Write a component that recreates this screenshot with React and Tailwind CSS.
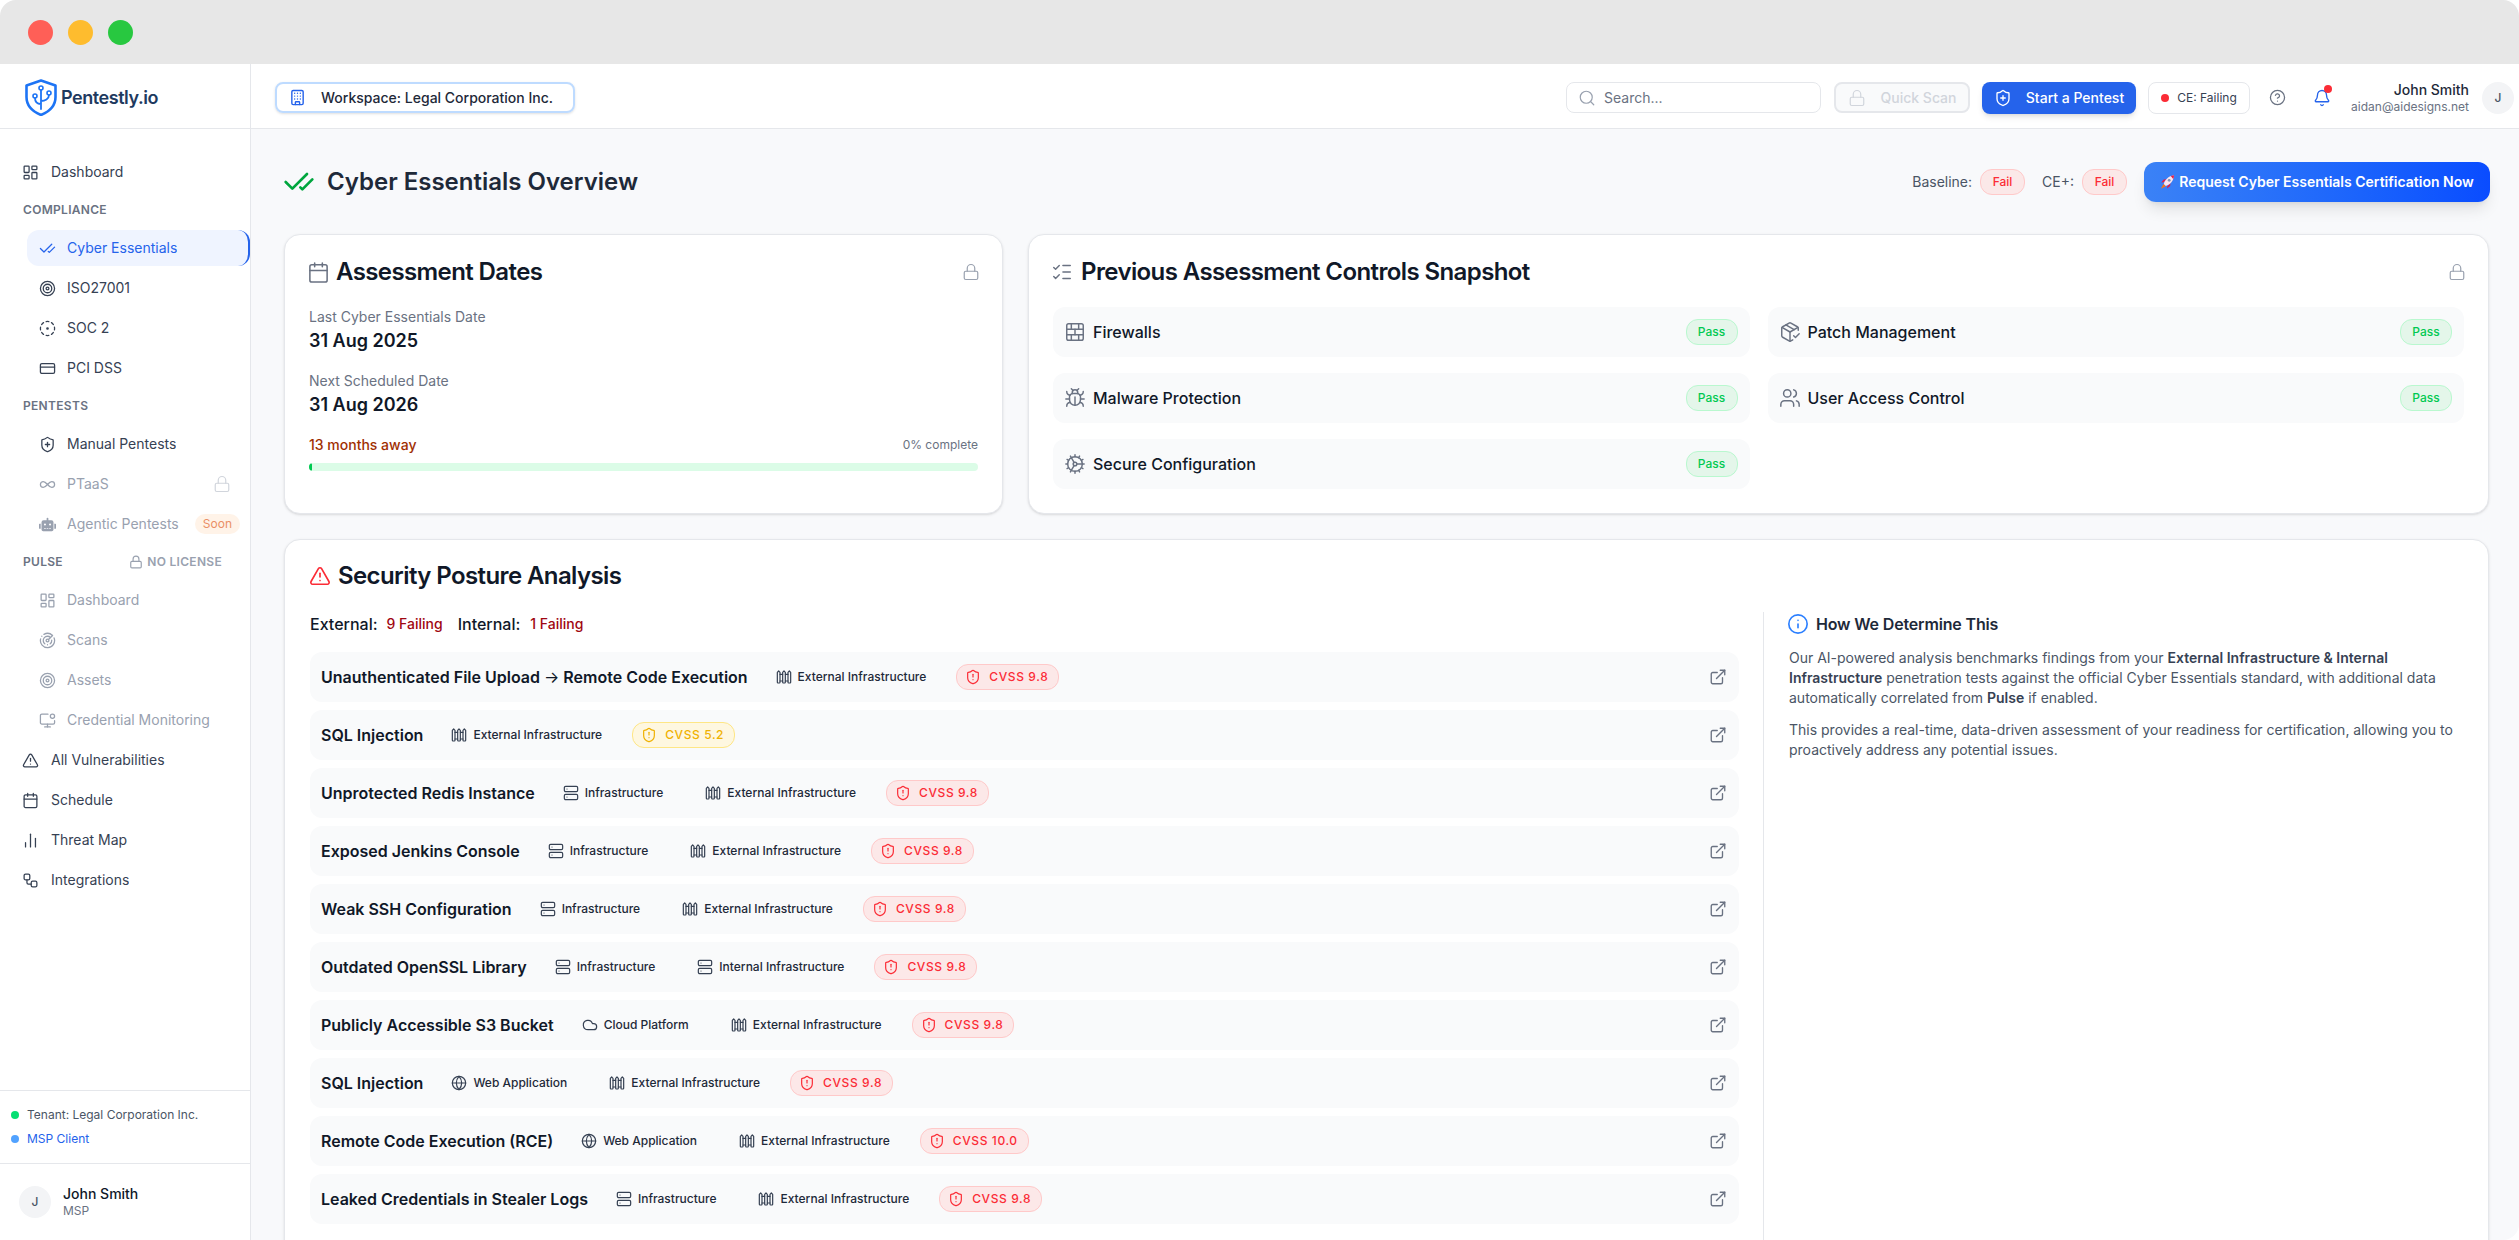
import React from 'react';
import {
  Bell, Building, Calendar, ChartNoAxesColumn, CheckCheck, CircleDotDashed, CircleHelp, Cloud, Cog, CreditCard,
  ExternalLink, Fence, Globe, Info, Infinity as InfinityIcon, LayoutDashboard, ListChecks, Lock, MonitorDot,
  PackageCheck, Radar, Search, Server, ShieldAlert, ShieldPlus, Target, TriangleAlert, Users, Workflow, BrickWall, Bug,
} from 'lucide-react';
import { FaRobot } from 'react-icons/fa';

function LogoShield() {
  return (
    <svg width="32" height="37" viewBox="0 0 32 37" fill="none" stroke="#1d74f5" strokeLinecap="round" strokeLinejoin="round">
      <path d="M16 1.500 30.500 6.500V18c0 8.500-6 14.500-14.500 18C7.500 32.500 1.500 26.500 1.500 18V6.500Z" strokeWidth="2.600" />
      <path d="M16 30V11M16 25c-4 0-6-2-6-6M16 22c4 0 8-2 8-6" strokeWidth="1.800" />
      <circle cx="16" cy="9" r="2" strokeWidth="1.600" />
      <circle cx="10" cy="17" r="2" strokeWidth="1.600" />
      <circle cx="24" cy="14" r="2" strokeWidth="1.600" />
    </svg>
  );
}

function RocketGlyph() {
  return (
    <svg width="15" height="16" viewBox="0 0 16 16">
      <path d="M3.600 10 1 15.300 6.300 12.600Z" fill="#f97316" />
      <path d="M3.800 8.300 1.300 8.600 4 5.300 7 5ZM7.800 12.400l-.2 2.500 3.200-2.700.3-3Z" fill="#e11d48" />
      <path d="M4 10C5.300 5.300 9.300 1.500 15 .8 14.600 6.700 10.800 10.800 6.200 12.200Z" fill="#fbe4ec" />
      <path d="M11.500 1.600 15 .8c-.1 1.400-.4 2.800-.9 4Z" fill="#e11d48" />
      <circle cx="9.800" cy="6.200" r="1.500" fill="#7c93b8" />
    </svg>
  );
}

function NavItem({ icon: Icon, label, sub, active, muted, right }) {
  const tone = active
    ? 'bg-[#eff4ff] text-[#2563eb] border-r-2 border-[#2563eb] rounded-xl'
    : muted ? 'text-gray-400' : 'text-gray-700';
  return (
    <div className={`flex items-center h-9 ${sub ? 'ml-[27px] pl-[12px] pr-[11px]' : 'pl-[22px]'} ${tone}`}>
      <Icon size={17} strokeWidth={1.800} className="shrink-0" />
      <span className={`text-sm truncate ${sub ? 'ml-[11px]' : 'ml-[12px]'}`}>{label}</span>
      {right && <span className="ml-auto">{right}</span>}
    </div>
  );
}

function SectionLabel({ children, right }) {
  return (
    <div className="flex items-center justify-between h-4 pl-[23px] pr-[28px] text-xs font-semibold uppercase tracking-wide text-gray-500">
      <span>{children}</span>
      {right}
    </div>
  );
}

function Sidebar() {
  return (
    <aside className="w-[251px] shrink-0 flex flex-col bg-white border-r border-gray-200">
      <div className="h-[65px] shrink-0 border-b border-gray-200 flex items-center pl-[25px] pt-[3px]">
        <LogoShield />
        <span className="ml-1 text-lg font-semibold tracking-tight text-[#1e3a5f]">Pentestly.io</span>
      </div>
      <nav className="flex-1 pt-[25px] flex flex-col">
        <NavItem icon={LayoutDashboard} label="Dashboard" />
        <div className="mt-3"><SectionLabel>Compliance</SectionLabel></div>
        <div className="mt-3 flex flex-col gap-1">
          <NavItem icon={CheckCheck} label="Cyber Essentials" sub active />
          <NavItem icon={Target} label="ISO27001" sub />
          <NavItem icon={CircleDotDashed} label="SOC 2" sub />
          <NavItem icon={CreditCard} label="PCI DSS" sub />
        </div>
        <div className="mt-3"><SectionLabel>Pentests</SectionLabel></div>
        <div className="mt-3 flex flex-col gap-1">
          <NavItem icon={ShieldPlus} label="Manual Pentests" sub />
          <NavItem icon={InfinityIcon} label="PTaaS" sub muted right={<Lock size={18} strokeWidth={1.600} className="mr-[8px] text-gray-300" />} />
          <NavItem icon={FaRobot} label="Agentic Pentests" sub muted right={<span className="block rounded-full bg-[#fff3e8] px-2 py-0.5 text-xs text-[#ea8f66] -mr-[1px]">Soon</span>} />
        </div>
        <div className="mt-3">
          <SectionLabel right={<span className="flex items-center gap-[4px] text-gray-400"><Lock size={14} />No License</span>}>Pulse</SectionLabel>
        </div>
        <div className="mt-3 flex flex-col gap-1">
          <NavItem icon={LayoutDashboard} label="Dashboard" sub muted />
          <NavItem icon={Radar} label="Scans" sub muted />
          <NavItem icon={Target} label="Assets" sub muted />
          <NavItem icon={MonitorDot} label="Credential Monitoring" sub muted />
          <NavItem icon={TriangleAlert} label="All Vulnerabilities" />
          <NavItem icon={Calendar} label="Schedule" />
          <NavItem icon={ChartNoAxesColumn} label="Threat Map" />
          <NavItem icon={Workflow} label="Integrations" />
        </div>
      </nav>
      <div className="h-[73px] shrink-0 border-t border-gray-200 flex flex-col justify-center gap-[8px] pl-[11px] text-xs">
        <div className="flex items-center gap-2 h-4 text-gray-600"><span className="size-2 rounded-full bg-green-400" />Tenant: Legal Corporation Inc.</div>
        <div className="flex items-center gap-2 h-4 text-[#2563eb]"><span className="size-2 rounded-full bg-blue-400" />MSP Client</div>
      </div>
      <div className="h-[77px] shrink-0 border-t border-gray-200 flex items-center pl-[19px]">
        <div className="size-8 rounded-full bg-gray-100 flex items-center justify-center text-xs font-medium text-gray-600">J</div>
        <div className="ml-3">
          <div className="text-sm leading-[18px] font-medium text-gray-900">John Smith</div>
          <div className="text-xs leading-4 text-gray-500">MSP</div>
        </div>
      </div>
    </aside>
  );
}

function Topbar() {
  return (
    <header className="h-[65px] shrink-0 bg-white border-b border-gray-200 flex items-center pl-[24px] pr-[5px] pt-[3px]">
      <div className="flex items-center h-[31px] w-[300px] rounded-lg border-2 border-blue-200 pl-[12px] text-sm font-medium text-gray-800 shadow-sm">
        <Building size={17} className="text-[#2563eb]" />
        <span className="ml-[15px]">Workspace: Legal Corporation Inc.</span>
      </div>
      <div className="ml-auto flex items-center">
        <div className="flex items-center w-[255px] h-[31px] rounded-lg border border-gray-200 pl-[11px] text-sm text-gray-500">
          <Search size={18} strokeWidth={1.600} className="text-gray-400" />
          <span className="ml-[8px]">Search...</span>
        </div>
        <div className="ml-[13px] flex items-center justify-center gap-[15px] w-[136px] h-[31px] rounded-lg border-2 border-gray-200 bg-gray-50 text-sm font-medium text-gray-300">
          <Lock size={18} strokeWidth={1.600} />Quick Scan
        </div>
        <div className="ml-[12px] flex items-center justify-center gap-[14px] w-[154px] h-[32px] rounded-lg bg-[#2563eb] text-sm font-medium text-white shadow-md">
          <ShieldPlus size={18} strokeWidth={1.800} />Start a Pentest
        </div>
        <div className="ml-[12px] flex items-center justify-center gap-[8px] w-[102px] h-[32px] rounded-lg border border-gray-200 text-xs text-gray-700">
          <span className="size-2 rounded-full bg-red-500" />CE: Failing
        </div>
        <CircleHelp size={17} strokeWidth={1.800} className="ml-[19px] text-gray-500" />
        <div className="relative ml-[27px]">
          <Bell size={18} strokeWidth={1.800} className="text-[#2563eb]" />
          <span className="absolute -top-[4px] -right-[1px] size-2 rounded-full bg-red-500" />
        </div>
        <div className="ml-[17px] w-[121px] text-right">
          <div className="text-sm leading-[18px] font-medium text-gray-800">John Smith</div>
          <div className="text-xs leading-4 text-gray-500">aidan@aidesigns.net</div>
        </div>
        <div className="ml-[13px] size-8 rounded-full bg-gray-100 flex items-center justify-center text-xs font-medium text-gray-600">J</div>
      </div>
    </header>
  );
}

function FailBadge() {
  return <span className="flex items-center justify-center w-[45px] h-[26px] rounded-xl border border-red-200 bg-[#fbe8e8] text-xs font-medium text-red-500">Fail</span>;
}

function PassBadge() {
  return <span className="flex items-center justify-center w-[52px] h-[26px] rounded-xl border border-green-200 bg-[#e4f6ea] text-xs font-medium text-green-500">Pass</span>;
}

function Control({ icon: Icon, label }) {
  return (
    <div className="flex items-center h-[50px] rounded-xl bg-gray-50 pl-[11px] pr-[12px]">
      <Icon size={22} strokeWidth={1.600} className="text-gray-500" />
      <span className="ml-[7px] text-base font-medium text-gray-900">{label}</span>
      <span className="ml-auto"><PassBadge /></span>
    </div>
  );
}

const TAGS = {
  ext: { icon: Fence, label: 'External Infrastructure' },
  int: { icon: Server, label: 'Internal Infrastructure' },
  inf: { icon: Server, label: 'Infrastructure' },
  cloud: { icon: Cloud, label: 'Cloud Platform' },
  web: { icon: Globe, label: 'Web Application' },
};

const FINDINGS = [
  { title: 'Unauthenticated File Upload', tail: 'Remote Code Execution', tags: ['ext'], score: '9.8' },
  { title: 'SQL Injection', tags: ['ext'], score: '5.2', medium: true },
  { title: 'Unprotected Redis Instance', tags: ['inf', 'ext'], score: '9.8' },
  { title: 'Exposed Jenkins Console', tags: ['inf', 'ext'], score: '9.8' },
  { title: 'Weak SSH Configuration', tags: ['inf', 'ext'], score: '9.8' },
  { title: 'Outdated OpenSSL Library', tags: ['inf', 'int'], score: '9.8' },
  { title: 'Publicly Accessible S3 Bucket', tags: ['cloud', 'ext'], score: '9.8' },
  { title: 'SQL Injection', tags: ['web', 'ext'], score: '9.8' },
  { title: 'Remote Code Execution (RCE)', tags: ['web', 'ext'], score: '10.0' },
  { title: 'Leaked Credentials in Stealer Logs', tags: ['inf', 'ext'], score: '9.8' },
];

function Finding({ title, tail, tags, score, medium }) {
  return (
    <div className="flex items-center h-[50px] rounded-xl bg-gray-50 pl-[11px] pr-[12px]">
      <span className="text-base font-semibold text-gray-900 whitespace-nowrap">
        {title}{tail && <> <span className="font-normal">→</span> {tail}</>}
      </span>
      <div className="ml-[28px] flex items-center gap-[42px]">
        {tags.map((t) => {
          const Icon = TAGS[t].icon;
          return (
            <span key={t} className="flex items-center gap-[6px] text-xs font-medium text-gray-800">
              <Icon size={16} strokeWidth={1.800} className="text-gray-700" />{TAGS[t].label}
            </span>
          );
        })}
      </div>
      <span className={`ml-[30px] flex items-center gap-2 h-[26px] rounded-xl border pl-[8px] pr-[10px] text-xs font-medium tracking-wider ${medium ? 'border-amber-200 bg-[#fef7e0] text-yellow-500' : 'border-red-200 bg-[#fce8e8] text-red-500'}`}>
        <ShieldAlert size={16} strokeWidth={1.800} />CVSS {score}
      </span>
      <ExternalLink size={18} strokeWidth={1.800} className="ml-auto text-gray-500" />
    </div>
  );
}

export default function App() {
  return (
    <div className="w-[2519px] h-[1240px] overflow-hidden bg-white font-['Inter',sans-serif] flex flex-col">
      <div className="h-[64px] shrink-0 rounded-t-2xl bg-[#e7e7e7] flex items-center pl-[28px] gap-[15px]">
        <span className="size-[25px] rounded-full bg-[#ff5f57]" />
        <span className="size-[25px] rounded-full bg-[#febc2e]" />
        <span className="size-[25px] rounded-full bg-[#28c840]" />
      </div>
      <div className="flex-1 min-h-0 flex rounded-b-2xl overflow-hidden">
        <Sidebar />
        <div className="flex-1 min-w-0 flex flex-col bg-[#f8f9fb]">
          <Topbar />
          <main className="flex-1 min-h-0 overflow-hidden pl-[33px] pr-[30px] pt-[33px]">
            <div className="flex items-center h-[40px]">
              <CheckCheck size={32} strokeWidth={2} className="text-green-600 -ml-[1px]" />
              <h1 className="ml-[12px] text-2xl font-semibold text-gray-800">Cyber Essentials Overview</h1>
              <div className="ml-auto -mr-[1px] flex items-center text-sm text-gray-600">
                <span>Baseline:</span>
                <span className="ml-2"><FailBadge /></span>
                <span className="ml-[17px]">CE+:</span>
                <span className="ml-2"><FailBadge /></span>
                <div className="ml-[17px] flex items-center justify-center gap-1 w-[346px] h-[40px] rounded-xl bg-gradient-to-r from-[#3b82f6] to-[#0a4cff] font-semibold text-white shadow-lg">
                  <RocketGlyph />Request Cyber Essentials Certification Now
                </div>
              </div>
            </div>
            <div className="mt-[32px] flex gap-[25px]">
              <section className="w-[719px] h-[280px] shrink-0 rounded-2xl border border-gray-200 bg-white shadow-sm p-6">
                <div className="flex items-center h-[26px]">
                  <Calendar size={23} strokeWidth={1.600} className="text-gray-500 -ml-[2px]" />
                  <h2 className="ml-[6px] text-2xl font-semibold tracking-tight text-gray-900">Assessment Dates</h2>
                  <Lock size={18} strokeWidth={1.600} className="ml-auto -mr-[2px] text-gray-400" />
                </div>
                <div className="mt-[22px] text-sm leading-5 text-gray-500">Last Cyber Essentials Date</div>
                <div className="mt-[2px] text-lg leading-6 font-semibold text-gray-900">31 Aug 2025</div>
                <div className="mt-[18px] text-sm leading-5 text-gray-500">Next Scheduled Date</div>
                <div className="mt-[2px] text-lg leading-6 font-semibold text-gray-900">31 Aug 2026</div>
                <div className="mt-[18px] flex items-center justify-between h-5">
                  <span className="text-sm font-medium text-orange-800">13 months away</span>
                  <span className="text-xs text-gray-500">0% complete</span>
                </div>
                <div className="mt-[8px] h-2 rounded-full bg-green-100 overflow-hidden">
                  <div className="h-full w-[3px] bg-green-500 rounded-full" />
                </div>
              </section>
              <section className="flex-1 h-[280px] rounded-2xl border border-gray-200 bg-white shadow-sm p-6">
                <div className="flex items-center h-[26px]">
                  <ListChecks size={22} strokeWidth={1.600} className="text-gray-500 -ml-[2px]" />
                  <h2 className="ml-[8px] text-2xl font-semibold tracking-tight text-gray-900">Previous Assessment Controls Snapshot</h2>
                  <Lock size={18} strokeWidth={1.600} className="ml-auto -mr-[2px] text-gray-400" />
                </div>
                <div className="mt-[22px] grid grid-cols-2 gap-x-[18px] gap-y-4">
                  <Control icon={BrickWall} label="Firewalls" />
                  <Control icon={PackageCheck} label="Patch Management" />
                  <Control icon={Bug} label="Malware Protection" />
                  <Control icon={Users} label="User Access Control" />
                  <Control icon={Cog} label="Secure Configuration" />
                </div>
              </section>
            </div>
            <section className="mt-[25px] h-[720px] rounded-2xl border border-gray-200 bg-white shadow-sm pt-[22px] pl-[25px] pr-[24px] flex">
              <div className="w-[1429px] shrink-0">
                <div className="flex items-center h-[28px]">
                  <TriangleAlert size={22} strokeWidth={1.800} className="text-red-500 -ml-[1px]" />
                  <h2 className="ml-[7px] text-2xl font-semibold tracking-tight text-gray-900">Security Posture Analysis</h2>
                </div>
                <div className="mt-[24px] flex items-center h-5 text-base font-medium text-gray-900">
                  External:<span className="ml-[9px] text-sm text-red-800">9 Failing</span>
                  <span className="ml-[15px]">Internal:</span><span className="ml-[10px] text-sm text-red-800">1 Failing</span>
                </div>
                <div className="mt-[18px] flex flex-col gap-2">
                  {FINDINGS.map((f, i) => <Finding key={i} {...f} />)}
                </div>
              </div>
              <div className="ml-[24px] mt-[50px] flex-1 border-l border-gray-200 pl-[25px] pt-[2px]">
                <div className="flex items-center h-5">
                  <Info size={22} strokeWidth={1.800} className="text-blue-500 -ml-[2px]" />
                  <span className="ml-[7px] text-base font-semibold tracking-[-0.01em] text-gray-800">How We Determine This</span>
                </div>
                <p className="mt-[14px] text-sm leading-5 text-gray-600">
                  Our AI-powered analysis benchmarks findings from your <b className="font-semibold text-gray-700">External Infrastructure &amp; Internal Infrastructure</b> penetration tests against the official Cyber Essentials standard, with additional data automatically correlated from <b className="font-semibold text-gray-700">Pulse</b> if enabled.
                </p>
                <p className="mt-3 text-sm leading-5 text-gray-600">
                  This provides a real-time, data-driven assessment of your readiness for certification, allowing you to proactively address any potential issues.
                </p>
              </div>
            </section>
          </main>
        </div>
      </div>
    </div>
  );
}
